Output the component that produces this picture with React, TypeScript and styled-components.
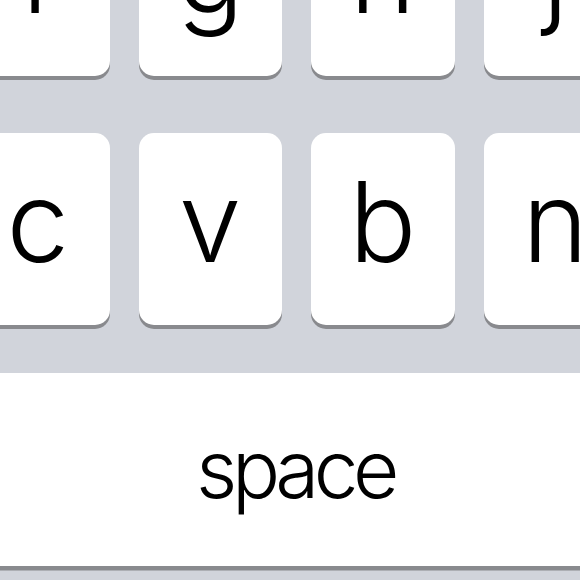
import React from 'react';
import styled, { createGlobalStyle } from 'styled-components';

const GlobalStyle = createGlobalStyle`
  html, body {
    margin: 0;
    padding: 0;
    background: #d1d4db;
    overflow: hidden;
  }
  #root {
    width: 580px;
    height: 580px;
    overflow: hidden;
  }
`;

const Keyboard = styled.div`
  display: flex;
  flex-direction: column;
  margin-top: -116px;
`;

const Row = styled.div<{ $gapBelow: number }>`
  display: flex;
  gap: 29px;
  margin-left: -34px;
  margin-bottom: ${p => p.$gapBelow}px;
`;

const Key = styled.div`
  flex: 0 0 143.5px;
  height: 192px;
  background: #ffffff;
  border-radius: 15px;
  box-shadow: 0 4px 0 #898a8e;
  display: flex;
  align-items: center;
  justify-content: center;
  padding-bottom: 16px;
  box-sizing: border-box;
  font-family: Inter, 'Liberation Sans', sans-serif;
  font-weight: 300;
  font-size: 112px;
  line-height: 1;
  color: #000;
`;

const SpaceRow = styled.div`
  display: flex;
  margin-left: -20px;
`;

const SpaceKey = styled.div`
  flex: 0 0 630px;
  height: 193px;
  background: #ffffff;
  border-radius: 15px;
  box-shadow: 0 4.5px 0 #898a8e;
  display: flex;
  align-items: center;
  justify-content: center;
  padding-bottom: 2px;
  box-sizing: border-box;
  font-family: Inter, 'Liberation Sans', sans-serif;
  font-weight: 300;
  font-size: 80px;
  letter-spacing: -5.5px;
  line-height: 1;
  color: #000;
`;

const rows = [
  { keys: ['f', 'g', 'h', 'j'], gap: 57 },
  { keys: ['c', 'v', 'b', 'n'], gap: 48 },
];

export default function App() {
  return (
    <>
      <GlobalStyle />
      <Keyboard>
        {rows.map(r => (
          <Row key={r.keys.join('')} $gapBelow={r.gap}>
            {r.keys.map(k => (
              <Key key={k}>{k}</Key>
            ))}
          </Row>
        ))}
        <SpaceRow>
          <SpaceKey>space</SpaceKey>
        </SpaceRow>
      </Keyboard>
    </>
  );
}
